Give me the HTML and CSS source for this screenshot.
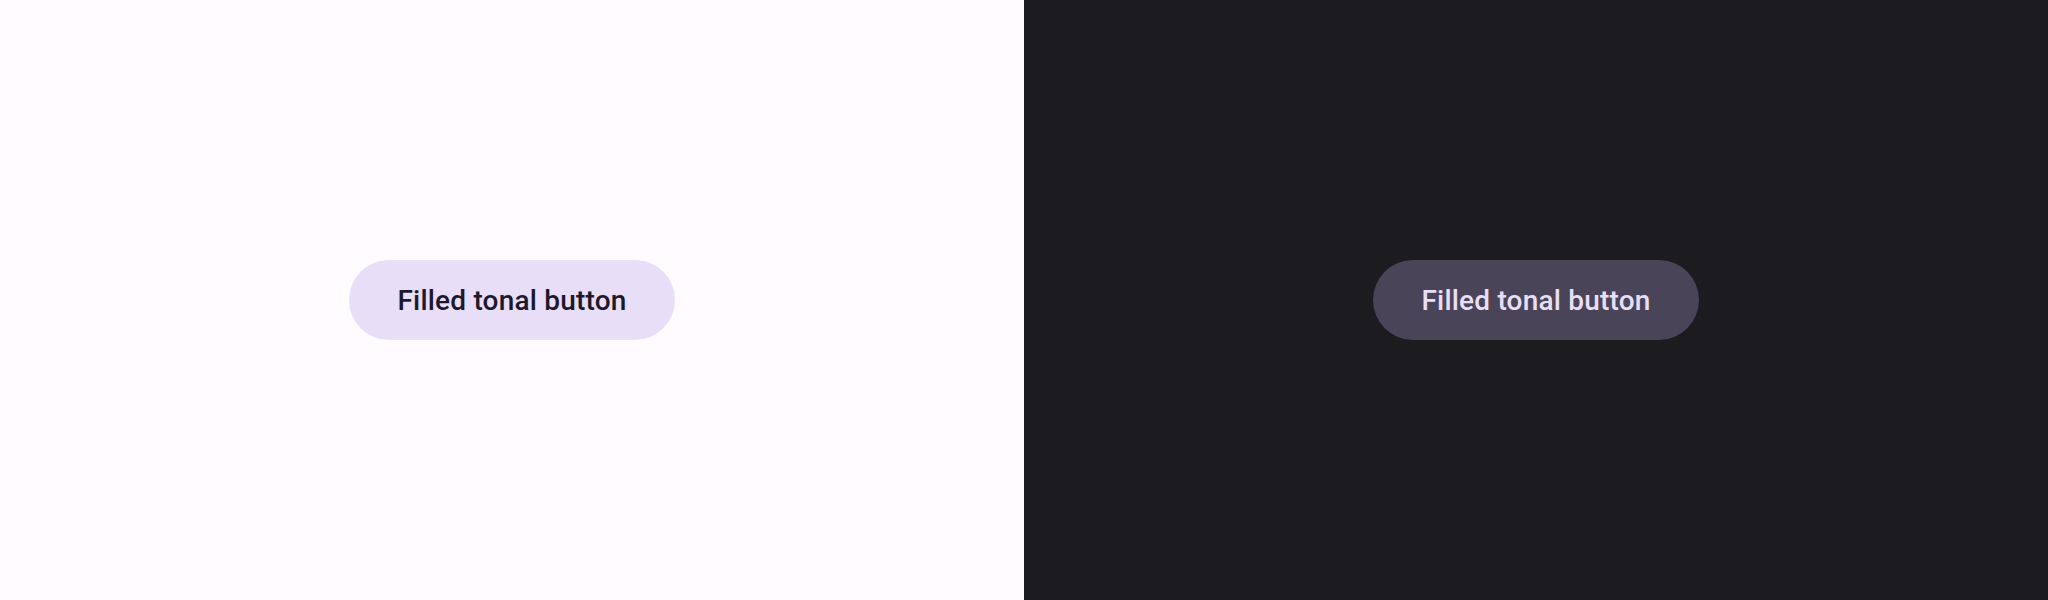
FILE: index.html
```html
<!DOCTYPE html>
<html lang="en">
<head>
    <meta charset="UTF-8">
    <title>Filled tonal button</title>
    <link rel="stylesheet" href="styles.css">
</head>
<body>
    <div class="panes">
        <!-- Light theme -->
        <div class="pane light">
            <button class="tonal-btn">Filled tonal button</button>
        </div>
        <!-- Dark theme -->
        <div class="pane dark">
            <button class="tonal-btn">Filled tonal button</button>
        </div>
    </div>
</body>
</html>
```

FILE: styles.css
```css
* {
    margin: 0;
    padding: 0;
    box-sizing: border-box;
}

body {
    font-family: Roboto, "Liberation Sans", sans-serif;
    height: 100vh;
}

.panes {
    display: grid;
    grid-template-columns: 1fr 1fr;
    height: 100%;
}

.pane {
    display: flex;
    justify-content: center;
    align-items: center;
}

.pane.light {
    background-color: #FFFBFE;
    --container: #E8DEF8;
    --on-container: #1D192B;
}

.pane.dark {
    background-color: #1C1B1F;
    --container: #4A4458;
    --on-container: #E8DEF8;
}

.tonal-btn {
    height: 80px;
    padding: 0 48px;
    border: none;
    border-radius: 40px;
    background-color: var(--container);
    color: var(--on-container);
    font-family: Roboto, "Liberation Sans", sans-serif;
    font-size: 28px;
    font-weight: 500;
    letter-spacing: 0.2px;
    cursor: pointer;
}
```
